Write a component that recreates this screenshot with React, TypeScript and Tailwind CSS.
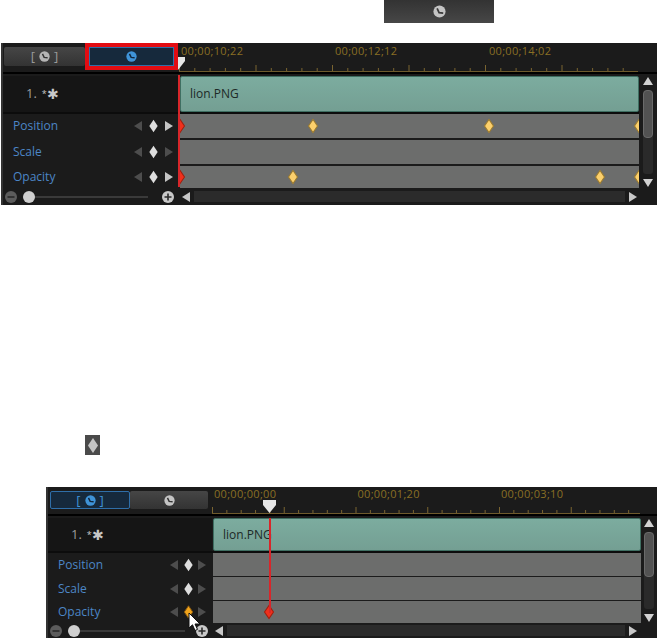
import React from 'react';

const FONT = 'font-["Open_Sans","Noto_Sans",sans-serif]';

interface TimelineProps {
  className: string;
  labelWidth: string;
  tabsClass: string;
  tabHeight: string;
  toolbarHeight: string;
  timecodeRow: string;
  timecodes: string[];
  timecodeWidth: string;
  tickStep: number;
  tracksWidth: number;
  rowHeights: string[];
  clipHeight: string;
  keys: { row: number; left: number; color: 'gold' | 'red' }[];
  activeFirst: boolean;
  controlsClass: string;
  controlsWidth: string;
  sliderClass: string;
  sliderGap: string;
  footerHeight: string;
  scrollWidth: string;
  thumbHeight: string;
  line: string;
  handleClass: string;
  halfHandle?: boolean;
}

function Clock({ size, color, hole }: { size: number; color: string; hole: string }) {
  return (
    <svg width={size} height={size} viewBox="0 0 12 12">
      <circle cx="6" cy="6" r="5.6" fill={color} />
      <path d="M3.8 3.2 L5.6 7 L9.4 7.4" fill="none" stroke={hole} strokeWidth="1.6" />
    </svg>
  );
}

function Diamond({ fill, stroke, w = 11, h = 14 }: { fill: string; stroke?: string; w?: number; h?: number }) {
  return (
    <svg width={w} height={h} viewBox="0 0 10 14">
      <path d="M5 .8 L9.2 7 L5 13.2 L.8 7 Z" fill={fill} stroke={stroke || 'none'} strokeWidth="1" />
    </svg>
  );
}

function Arrow({ dir, color }: { dir: 'left' | 'right' | 'up' | 'down'; color: string }) {
  const d = {
    left: 'M8 0 L8 10 L0 5 Z',
    right: 'M0 0 L0 10 L8 5 Z',
    up: 'M0 8 L10 8 L5 0 Z',
    down: 'M0 0 L10 0 L5 8 Z',
  }[dir];
  const vertical = dir === 'up' || dir === 'down';
  return (
    <svg width={vertical ? 10 : 8} height={vertical ? 8 : 10} viewBox={vertical ? '0 0 10 8' : '0 0 8 10'}>
      <path d={d} fill={color} />
    </svg>
  );
}

function RoundButton({ plus }: { plus?: boolean }) {
  return (
    <svg width="12" height="12" viewBox="0 0 12 12" className="shrink-0">
      <circle cx="6" cy="6" r="6" fill={plus ? '#c9c9c9' : '#5c5c5c'} />
      <path d={plus ? 'M2.5 6 H9.5 M6 2.5 V9.5' : 'M2.5 6 H9.5'} stroke="#2a2a2a" strokeWidth="1.6" />
    </svg>
  );
}

function Ruler({ width, step }: { width: number; step: number }) {
  const count = Math.floor(width / step);
  return (
    <svg width={width} height="8" className="-ml-[2px] block">
      {Array.from({ length: count + 1 }).map((_, i) => (
        <line key={i} x1={i * step + 0.5} x2={i * step + 0.5} y1={i % 5 === 0 ? 1 : 4} y2="7" stroke="#7a6430" />
      ))}
      <line x1="0" x2={width} y1="7.5" y2="7.5" stroke="#6e5a2c" />
    </svg>
  );
}

function Timeline(p: TimelineProps) {
  const labels = ['Position', 'Scale', 'Opacity'];
  const rightArrow = (row: number) => (p.activeFirst || row === 1 ? '#4d4d4d' : '#c4c4c4');
  return (
    <div className={`relative flex flex-col overflow-hidden bg-[#1b1b1b] ${FONT} ${p.className}`}>
      {/* tabs + ruler */}
      <div className={`flex shrink-0 ${p.toolbarHeight}`}>
        <div className={`flex shrink-0 items-start ${p.labelWidth} ${p.tabsClass}`}>
          <div
            className={`flex flex-1 items-center justify-center rounded-[2px] ${p.tabHeight} ${
              p.activeFirst
                ? 'border border-[#2f6ea8] bg-[#16293c] text-[#3f93d8]'
                : 'bg-gradient-to-b from-[#464646] to-[#333333] text-[#9a9a9a]'
            }`}
          >
            <span className="flex items-center gap-[4px] text-[13px] leading-none">
              [<Clock size={11} color={p.activeFirst ? '#3f93d8' : '#b5b5b5'} hole={p.activeFirst ? '#12263c' : '#333'} />]
            </span>
          </div>
          <div
            className={`flex items-center justify-center ${p.tabHeight} ${
              p.activeFirst
                ? 'flex-1 rounded-[2px] bg-gradient-to-b from-[#464646] to-[#333333]'
                : 'ml-[4px] w-[85px] shrink-0 border border-[#2f6ea8] bg-[#16293c] outline-[4px] outline-[#e20c12]'
            }`}
          >
            <Clock size={11} color={p.activeFirst ? '#c4c4c4' : '#3f93d8'} hole={p.activeFirst ? '#333' : '#12263c'} />
          </div>
        </div>
        <div className="flex min-w-0 flex-1 flex-col pl-[2px]">
          <div className={`flex items-center text-[11px] tracking-[.3px] text-[#8a6f24] ${p.timecodeRow}`}>
            {p.timecodes.map(t => (
              <span key={t} className={`shrink-0 ${p.timecodeWidth}`}>{t}</span>
            ))}
          </div>
          <Ruler width={p.tracksWidth} step={p.tickStep} />
        </div>
      </div>
      <div className="mb-[2px] h-[2px] shrink-0 bg-black" />

      <div className="flex min-h-0">
        <div className="min-w-0 flex-1">
          {/* clip row */}
          <div className={`flex border-b-2 border-[#0c0c0c] ${p.clipHeight}`}>
            <div className={`flex shrink-0 items-center gap-[5px] bg-[#151515] pl-[23px] text-[13px] text-[#9c9c9c] ${p.labelWidth}`}>
              <span>1.</span>
              <span className="flex items-center text-[#c8c8c8]">
                <span className="text-[9px]">*</span>
                <span className="text-[14px] leading-none">✱</span>
              </span>
            </div>
            <div className="flex-1 pl-[1px]">
              <div className="flex h-full items-center rounded-[2px] border border-[#3f6f62] bg-gradient-to-b from-[#7cac9f] to-[#749f93] pl-[9px] text-[12px] text-[#1d2a27]">
                lion.PNG
              </div>
            </div>
          </div>
          {/* property rows */}
          {labels.map((label, row) => (
            <div key={label} className={`flex ${p.rowHeights[row]}`}>
              <div className={`flex shrink-0 items-center justify-between bg-[#1b1b1b] text-[12px] text-[#4c86c6] ${p.labelWidth} ${p.controlsClass}`}>
                <span>{label}</span>
                <span className={`flex items-center justify-between ${p.controlsWidth}`}>
                  <Arrow dir="left" color="#4d4d4d" />
                  {p.activeFirst && row === 2 ? <Diamond fill="#f0a41c" stroke="#8a5a10" /> : <Diamond fill="#dedede" />}
                  <Arrow dir="right" color={rightArrow(row)} />
                </span>
              </div>
              <div className="relative ml-[1px] flex-1 overflow-hidden bg-[#6c6d6c]">
                {p.keys.filter(k => k.row === row).map(k => (
                  <span key={k.left} className="absolute top-1/2 -translate-x-1/2 -translate-y-1/2" style={{ left: k.left }}>
                    <Diamond fill={k.color === 'gold' ? '#fcd06c' : '#f0301c'} stroke={k.color === 'gold' ? '#9a7a30' : '#a02010'} w={11} h={15} />
                  </span>
                ))}
              </div>
            </div>
          ))}
        </div>
        {/* vertical scrollbar */}
        <div className={`flex shrink-0 flex-col items-center pt-[1px] pb-[1px] ${p.scrollWidth}`}>
          <Arrow dir="up" color="#d2d2d2" />
          <div className="mt-[5px] flex w-[10px] flex-1 flex-col rounded-[3px] bg-[#2a2a2a]">
            <div className={`rounded-[4px] border border-[#6a6a6a] bg-[#525252] ${p.thumbHeight}`} />
          </div>
          <div className="mt-[5px] flex"><Arrow dir="down" color="#d2d2d2" /></div>
        </div>
      </div>

      {/* footer */}
      <div className={`flex shrink-0 items-center ${p.footerHeight}`}>
        <div className={`flex shrink-0 items-center ${p.labelWidth} ${p.sliderClass}`}>
          <RoundButton />
          <div className={`relative ml-[6px] h-[2px] flex-1 bg-[#3a3a3a] ${p.sliderGap}`}>
            <span className="absolute -top-[5px] left-0 h-[12px] w-[12px] rounded-full bg-[#cfcfcf]" />
          </div>
          <RoundButton plus />
        </div>
        <div className="flex flex-1 items-center gap-[4px] pl-[3px] pr-[20px]">
          <Arrow dir="left" color="#c8c8c8" />
          <div className="h-[11px] flex-1 bg-[#2b2b2b]" />
          <Arrow dir="right" color="#c8c8c8" />
        </div>
      </div>

      {/* playhead */}
      <span className={`absolute w-[1.5px] bg-[#d8262a] ${p.line}`} />
      <span className={`absolute flex ${p.handleClass}`}>
        {p.halfHandle ? (
          <svg width="7" height="13" viewBox="0 0 7 13">
            <path d="M0 0 H7 V4 L0 13 Z" fill="#e6e6e6" />
          </svg>
        ) : (
          <svg width="13" height="13" viewBox="0 0 13 13">
            <path d="M0 0 H13 V5 L6.5 13 L0 5 Z" fill="#e6e6e6" />
          </svg>
        )}
      </span>
    </div>
  );
}

export default function App() {
  return (
    <div className="relative h-[638px] w-[658px] overflow-hidden bg-white">
      <div className="ml-[384px] flex h-[23px] w-[110px] items-center justify-center bg-gradient-to-b from-[#333333] to-[#474747]">
        <Clock size={13} color="#c4c4c4" hole="#3a3a3a" />
      </div>

      <Timeline
        className="ml-[1px] mt-[20px] h-[162px] w-[656px] border-l-2 border-[#333333]"
        labelWidth="w-[176px]"
        tabsClass="pl-[1px] pr-[5px] pt-[4px]"
        tabHeight="h-[19px]"
        toolbarHeight="h-[29px]"
        timecodeRow="h-[21px] pb-[5px]"
        timecodes={['00;00;10;22', '00;00;12;12', '00;00;14;02']}
        timecodeWidth="w-[154px]"
        tickStep={15.3}
        tracksWidth={459}
        rowHeights={['h-[24px] mb-[2px]', 'h-[24px] mb-[2px]', 'h-[22px]']}
        clipHeight="h-[38px]"
        keys={[
          { row: 0, left: 0, color: 'red' },
          { row: 0, left: 133, color: 'gold' },
          { row: 0, left: 309, color: 'gold' },
          { row: 0, left: 459, color: 'gold' },
          { row: 2, left: 0, color: 'red' },
          { row: 2, left: 113, color: 'gold' },
          { row: 2, left: 420, color: 'gold' },
          { row: 2, left: 459, color: 'gold' },
        ]}
        activeFirst={false}
        controlsClass="pl-[10px] pr-[6px]"
        controlsWidth="w-[39px]"
        sliderClass="pl-[2px] pr-[5px]"
        sliderGap="mr-[14px]"
        footerHeight="h-[17px]"
        scrollWidth="w-[18px]"
        thumbHeight="h-[48px]"
        line="left-[175px] top-[32px] h-[112px]"
        handleClass="left-[175px] top-[14px]"
        halfHandle
      />

      <div className="ml-[85px] mt-[230px] flex h-[20px] w-[15px] items-center justify-center bg-[#4a4a4a]">
        <Diamond fill="#c4c4c4" w={12} h={19} />
      </div>

      <Timeline
        className="ml-[46px] mt-[32px] h-[151px] w-[611px] border-l-2 border-[#333333]"
        labelWidth="w-[164px]"
        tabsClass="pl-[2px] pr-[4px] pt-[4px]"
        tabHeight="h-[18px]"
        toolbarHeight="h-[27px]"
        timecodeRow="h-[19px] pb-[4px]"
        timecodes={['00;00;00;00', '00;00;01;20', '00;00;03;10']}
        timecodeWidth="w-[143.5px]"
        tickStep={14.35}
        tracksWidth={428}
        rowHeights={['h-[23px] mb-[1px]', 'h-[23px] mb-[1px]', 'h-[22px]']}
        clipHeight="h-[35px]"
        keys={[{ row: 2, left: 56, color: 'red' }]}
        activeFirst
        controlsClass="pl-[10px] pr-[6px]"
        controlsWidth="w-[36px]"
        sliderClass="pl-[2px] pr-[4px]"
        sliderGap="mr-[11px]"
        footerHeight="h-[15px]"
        scrollWidth="w-[16px]"
        thumbHeight="h-[45px]"
        line="left-[221px] top-[31px] h-[95px]"
        handleClass="left-[215px] top-[13px]"
      />

      {/* mouse cursor over the Opacity keyframe */}
      <div className="pointer-events-none absolute left-[188px] top-[612px]">
        <svg width="14" height="20" viewBox="0 0 14 20">
          <path d="M1 1 L1 16 L4.5 12.8 L7 18.5 L9.5 17.4 L7 12 L12 12 Z" fill="#ffffff" stroke="#111111" strokeWidth="1" />
        </svg>
      </div>
    </div>
  );
}
